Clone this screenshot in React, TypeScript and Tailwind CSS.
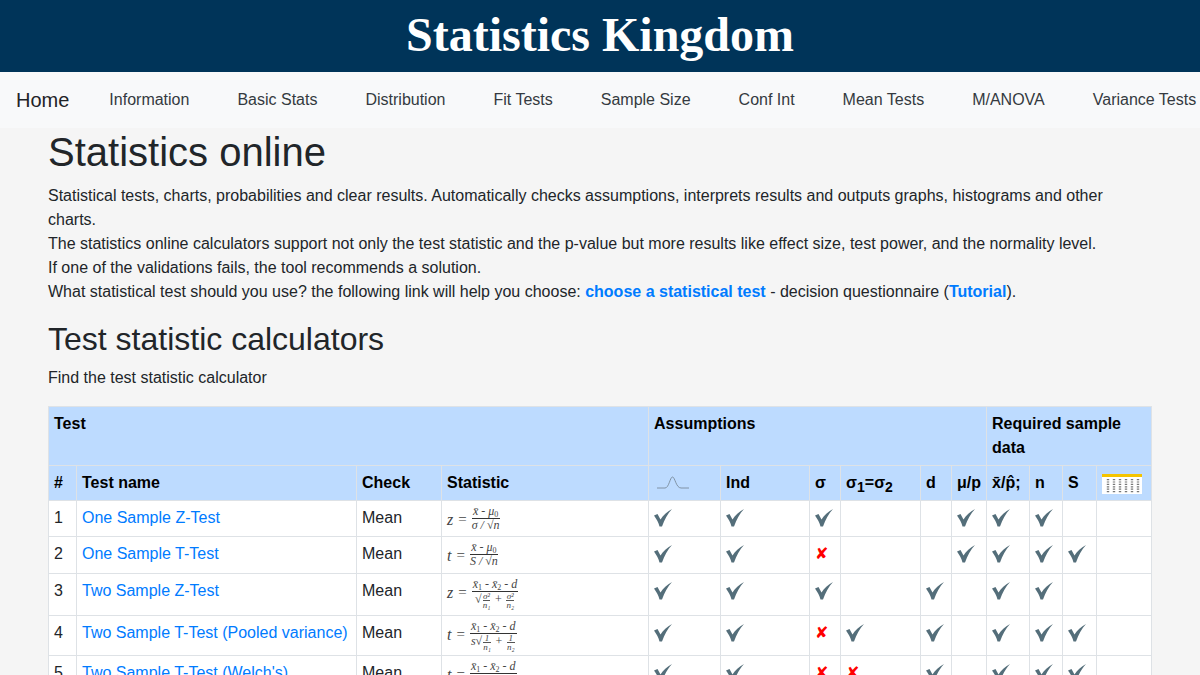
import React from 'react'

const navItems = ['Information', 'Basic Stats', 'Distribution', 'Fit Tests', 'Sample Size', 'Conf Int', 'Mean Tests', 'M/ANOVA', 'Variance Tests']

const Check = () => (
    <svg width="18" height="18" viewBox="0 0 18 18" className="mt-[3px] block">
        <path d="M0 6.5 L3.5 5 L6.5 10.5 C9 6.5 13 2.5 18 0 C13.5 5 10.5 10.5 8 17.5 L5.5 17.5 C4.5 13.5 2.5 10 0 6.5Z" fill="#546e7a" />
    </svg>
)
const Cross = () => <span className="font-['DejaVu_Sans'] text-[16px] leading-6 font-bold text-[#ff0000]">✘</span>

const Mark = ({ v }: { v: string }) => {
    if (v === 'y') return <Check />
    if (v === 'x') return <Cross />
    return null
}

const Frac = ({ top, bottom }: { top: React.ReactNode; bottom: React.ReactNode }) => (
    <span className="inline-flex flex-col items-center leading-none">
        <span className="whitespace-nowrap px-px text-[12px] leading-[13px]">{top}</span>
        <span className="w-full whitespace-nowrap border-t border-[#333] text-center text-[12px] leading-[13px]">{bottom}</span>
    </span>
)

// nested fraction under a root sign
const Mini = ({ top, bottom }: { top: React.ReactNode; bottom: React.ReactNode }) => (
    <span className="mx-px inline-flex flex-col items-center align-middle text-[9px] leading-[8px]">
        <span>{top}</span>
        <span className="border-t border-[#555]">{bottom}</span>
    </span>
)

const Formula = ({ name, top, bottom }: { name: string; top: React.ReactNode; bottom: React.ReactNode }) => (
    <div className="flex items-start gap-[5px] font-['Liberation_Serif',serif] italic text-[#444]">
        <span className="mt-[5px] text-[16px] leading-5">{name}</span>
        <span className="mt-[4px] text-[15px] leading-5 not-italic">=</span>
        <Frac top={top} bottom={bottom} />
    </div>
)

const sub = (s: string) => <sub className="text-[8px] not-italic">{s}</sub>

const xBar = (n?: string) => (
    <span>
        x̄
        {n ? sub(n) : null}
    </span>
)

const twoTop = (
    <>
        {xBar('1')} - {xBar('2')} - d
    </>
)

const rows = [
    {
        n: 1,
        name: 'One Sample Z-Test',
        h: 'h-[36px]',
        f: <Formula name="z" top={<>{xBar()} - μ{sub('0')}</>} bottom={<>σ / √n</>} />,
        marks: ['y', 'y', 'y', '', '', 'y', 'y', 'y', '', ''],
    },
    {
        n: 2,
        name: 'One Sample T-Test',
        h: 'h-[37px]',
        f: <Formula name="t" top={<>{xBar()} - μ{sub('0')}</>} bottom={<>S / √n</>} />,
        marks: ['y', 'y', 'x', '', '', 'y', 'y', 'y', 'y', ''],
    },
    {
        n: 3,
        name: 'Two Sample Z-Test',
        h: 'h-[42px]',
        f: <Formula name="z" top={twoTop} bottom={<>√<Mini top="σ²" bottom="n₁" /> + <Mini top="σ²" bottom="n₂" /></>} />,
        marks: ['y', 'y', 'y', '', 'y', '', 'y', 'y', '', ''],
    },
    {
        n: 4,
        name: 'Two Sample T-Test (Pooled variance)',
        h: 'h-[40px]',
        f: <Formula name="t" top={twoTop} bottom={<>s√<Mini top="1" bottom="n₁" /> + <Mini top="1" bottom="n₂" /></>} />,
        marks: ['y', 'y', 'x', 'y', 'y', '', 'y', 'y', 'y', ''],
    },
    {
        n: 5,
        name: 'Two Sample T-Test (Welch\'s)',
        h: 'h-[40px]',
        f: <Formula name="t" top={twoTop} bottom={<>√<Mini top="s²" bottom="n₁" /> + <Mini top="s²" bottom="n₂" /></>} />,
        marks: ['y', 'y', 'x', 'x', 'y', '', 'y', 'y', 'y', ''],
    },
]

const widths = ['w-[28px]', 'w-[280px]', 'w-[85px]', 'w-[207px]', 'w-[72px]', 'w-[89px]', 'w-[31px]', 'w-[80px]', 'w-[31px]', 'w-[35px]', 'w-[43px]', 'w-[33px]', 'w-[34px]', 'w-[55px]']

const th = 'border border-[#dee2e6] bg-[#bddbff] px-[5px] pt-[5px] text-left align-top font-bold text-black'
const td = 'border border-[#dee2e6] px-[5px] pt-[5px] align-top'

const App: React.FC = () => {
    return (
        <div className="h-[675px] w-[1200px] overflow-hidden bg-[#f5f5f5] font-['Liberation_Sans',sans-serif] text-[16px] leading-6 text-[#212529]">
            {/* Title bar */}
            <header className="flex h-[72px] items-center justify-center bg-[#003459] pb-0.5">
                <div className="font-['Liberation_Serif',serif] text-[48px] font-bold text-white">Statistics Kingdom</div>
            </header>

            {/* Menu */}
            <nav className="flex h-14 items-center overflow-hidden whitespace-nowrap bg-[#f8f9fa] pl-4">
                <span className="mr-10 text-[20px] text-[#1f2327]">Home</span>
                <div className="flex gap-12 text-[#343a40]">
                    {navItems.map((item) => (
                        <span key={item}>{item}</span>
                    ))}
                </div>
            </nav>

            <main className="px-12">
                <h1 className="mb-2 text-[40px] leading-[48px]">Statistics online</h1>
                <p className="mb-4">
                    Statistical tests, charts, probabilities and clear results. Automatically checks assumptions, interprets results and outputs graphs, histograms and other charts.
                    <br />
                    The statistics online calculators support not only the test statistic and the p-value but more results like effect size, test power, and the normality level.
                    <br />
                    If one of the validations fails, the tool recommends a solution.
                    <br />
                    What statistical test should you use? the following link will help you choose: <a className="font-bold text-[#007bff]">choose a statistical test</a> - decision questionnaire (<a className="font-bold text-[#007bff]">Tutorial</a>).
                </p>
                <h2 className="mb-2 text-[32px] leading-[38px]">Test statistic calculators</h2>
                <p className="mb-4">Find the test statistic calculator</p>

                <table className="w-[1103px] table-fixed border-collapse bg-white">
                    <colgroup>
                        {widths.map((w, i) => (
                            <col key={i} className={w} />
                        ))}
                    </colgroup>
                    <thead>
                        <tr className="h-[59px]">
                            <th colSpan={4} className={th}>Test</th>
                            <th colSpan={6} className={th}>Assumptions</th>
                            <th colSpan={4} className={th}>Required sample data</th>
                        </tr>
                        <tr className="h-[35px]">
                            <th className={th}>#</th>
                            <th className={th}>Test name</th>
                            <th className={th}>Check</th>
                            <th className={th}>Statistic</th>
                            <th className={th}>
                                <svg width="34" height="14" viewBox="0 0 34 14" className="mt-[5px] ml-[3px] block">
                                    <path d="M0 12 H8 C12 12 13 1 15.5 1 C18 1 19 12 24 12 H32" fill="none" stroke="#71818f" strokeWidth="0.8" />
                                </svg>
                            </th>
                            <th className={th}>Ind</th>
                            <th className={th}>σ</th>
                            <th className={`${th} whitespace-nowrap`}>
                                σ<sub className="text-[14px]">1</sub>=σ<sub className="text-[14px]">2</sub>
                            </th>
                            <th className={th}>d</th>
                            <th className={`${th} whitespace-nowrap`}>μ/p</th>
                            <th className={`${th} whitespace-nowrap`}>x̄/p̂;</th>
                            <th className={th}>n</th>
                            <th className={th}>S</th>
                            <th className={th}>
                                <svg width="40" height="20" viewBox="0 0 40 20" className="mt-[3px] block">
                                    <rect width="40" height="20" fill="#ffffff" />
                                    <rect width="40" height="3" fill="#f5c400" />
                                    {[6, 12, 18, 24, 30, 36].map((x) => (
                                        <path key={x} d={`M${x} 5 V19`} stroke="#777" strokeWidth="2.4" strokeDasharray="1.2 1.2" fill="none" />
                                    ))}
                                </svg>
                            </th>
                        </tr>
                    </thead>
                    <tbody>
                        {rows.map((r) => (
                            <tr key={r.n} className={r.h}>
                                <td className={td}>{r.n}</td>
                                <td className={`${td} whitespace-nowrap text-[#007bff]`}>{r.name}</td>
                                <td className={td}>Mean</td>
                                <td className={`${td} !py-0`}>
                                    <div className="mt-[4px]">{r.f}</div>
                                </td>
                                {r.marks.map((m, i) => (
                                    <td key={i} className={td}>
                                        <Mark v={m} />
                                    </td>
                                ))}
                            </tr>
                        ))}
                    </tbody>
                </table>
            </main>
        </div>
    )
}

export default App
